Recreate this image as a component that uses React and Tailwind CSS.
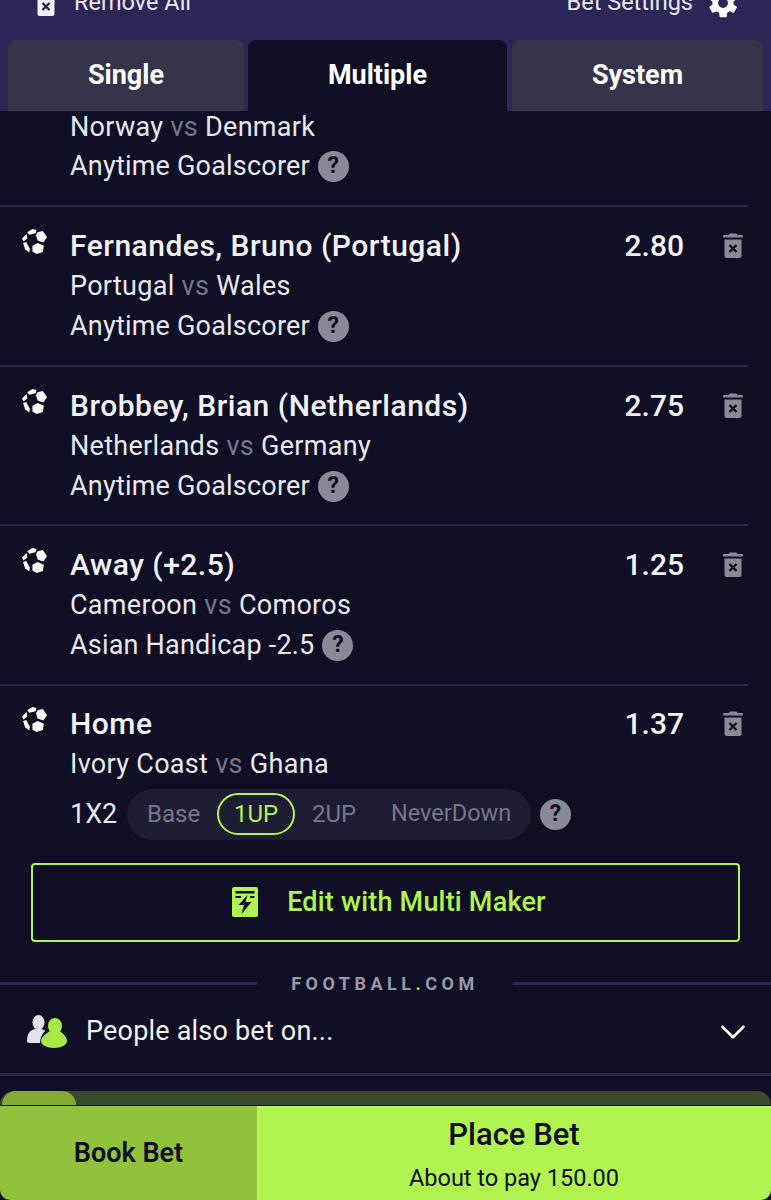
import React from "react";
import { ChevronDown } from "lucide-react";

const bets = [
  { title: "Fernandes, Bruno (Portugal)", odds: "2.80", home: "Portugal", away: "Wales", market: "Anytime Goalscorer" },
  { title: "Brobbey, Brian (Netherlands)", odds: "2.75", home: "Netherlands", away: "Germany", market: "Anytime Goalscorer" },
  { title: "Away (+2.5)", odds: "1.25", home: "Cameroon", away: "Comoros", market: "Asian Handicap -2.5" },
];

const BallIcon = () => (
  <svg width="25" height="25" viewBox="0 0 24 24" fill="#fff">
    <path d="M5 3 10 0 14 1 13 4 7 5.500Z" />
    <path d="M15 3 20 2 24 8 20.500 13 15 11 13.500 6Z" />
    <path d="M0 9 4.500 4.500 5 9 1.500 12Z" />
    <path d="M1 13.500 4 12.500 7.500 19 7 22.500 3 19.500Z" />
    <path d="M10 16 15 13.500 21 16 20 22 14 24 10 21.500Z" />
  </svg>
);

const TrashIcon = ({ color = "#8a8996", mark = "#0f0e24" }) => (
  <svg width="22" height="28" viewBox="0 0 22 28">
    <path d="M7.500 2.500h7l1 1.500H20a1 1 0 0 1 1 1v1.500H1V5a1 1 0 0 1 1-1h4.500z" fill={color} />
    <path d="M2.500 8.500h17V25a2 2 0 0 1-2 2h-13a2 2 0 0 1-2-2z" fill={color} />
    <path d="M7.500 14l7 7M14.500 14l-7 7" stroke={mark} strokeWidth="2.400" />
  </svg>
);

const HelpBadge = () => (
  <span className="flex h-[31px] w-[31px] items-center justify-center rounded-full bg-[#8a8996] text-[23px] font-bold text-[#0f0e24]">
    ?
  </span>
);

const GearIcon = () => (
  <svg width="34" height="34" viewBox="0 0 24 24" fill="#ffffff">
    <path d="M19.400 13c.1-.3.1-.7.1-1s0-.7-.1-1l2.100-1.600c.2-.2.2-.4.1-.6l-2-3.500c-.1-.2-.4-.3-.6-.2l-2.500 1c-.5-.4-1.100-.7-1.700-1l-.4-2.600c0-.3-.2-.5-.5-.5h-4c-.3 0-.5.2-.5.500l-.4 2.600c-.6.3-1.200.6-1.700 1l-2.500-1c-.2-.1-.5 0-.6.2l-2 3.500c-.1.2-.1.4.1.6L4.600 11c-.1.3-.1.700-.1 1s0 .7.1 1l-2.100 1.600c-.2.200-.2.400-.1.600l2 3.500c.1.200.4.300.6.200l2.500-1c.5.400 1.100.700 1.700 1l.4 2.600c0 .3.200.5.500.5h4c.3 0 .5-.2.5-.5l.4-2.600c.6-.3 1.200-.6 1.700-1l2.500 1c.2.100.5 0 .6-.2l2-3.500c.1-.2.100-.4-.1-.6zM12 15.500a3.500 3.500 0 1 1 0-7 3.500 3.500 0 0 1 0 7z" />
  </svg>
);

const BoltCard = () => (
  <svg width="26" height="30" viewBox="0 0 26 30">
    <rect width="26" height="30" rx="2" fill="#b2f44f" />
    <rect x="3.500" y="4" width="19" height="2.500" fill="#0f0e24" />
    <path d="M3.500 9H9v2H3.500zM18 9h4.500v2H18z" fill="#0f0e24" />
    <path d="M15.500 8 6.500 18h5.500L9.500 27l10-12h-6z" fill="#0f0e24" />
  </svg>
);

const PeopleIcon = () => (
  <svg width="40" height="33" viewBox="0 0 40 33">
    <ellipse cx="11.500" cy="7.500" rx="6" ry="7.500" fill="#e3e3e8" />
    <path d="M0 26c0-7 3-12 9-12h5c2 0 3 1 4 2-3 3-5 7-5 12H3c-2 0-3-1-3-2z" fill="#e3e3e8" />
    <ellipse cx="28" cy="11" rx="7" ry="8" fill="#a8ea45" />
    <path d="M23 16h10c4 3 7 7 7 10 0 4-6 7-13 7s-13-3-13-7c0-3 4-7 9-10z" fill="#a8ea45" />
  </svg>
);

const Tab = ({ label, active, className }) => (
  <div
    className={`flex h-[71px] items-center justify-center rounded-t-lg text-[27px] font-bold text-white ${
      active ? "bg-[#0f0e24]" : "bg-[#35344a]"
    } ${className}`}
  >
    {label}
  </div>
);

const Match = ({ home, away }) => (
  <p className="h-[40px] text-[27px] leading-[40px] tracking-[0.300px] text-[#e8e8ee]">
    {home} <span className="text-[#77768a]">vs</span> {away}
  </p>
);

const BetRow = ({ bet }) => (
  <div className="h-[159.500px] border-b-2 border-[#2a2850] pt-[19px]">
    <div className="flex">
      <div className="w-[70px] pl-[22px] pt-[3px]">
        <BallIcon />
      </div>
      <div className="flex-1">
        <div className="flex justify-between pr-[38px]">
          <p className="h-[40px] text-[30px] font-medium leading-[40px] tracking-[0.500px] text-[#f2f2f6]">{bet.title}</p>
          <p className="text-[30px] font-medium leading-[40px] text-[#f2f2f6]">{bet.odds}</p>
        </div>
        <Match home={bet.home} away={bet.away} />
        <div className="flex h-[41px] items-center gap-2 text-[27px] tracking-[0.200px] text-[#e8e8ee]">
          {bet.market}
          <HelpBadge />
        </div>
      </div>
      <div className="w-[26px] pt-[5px]">
        <TrashIcon />
      </div>
    </div>
  </div>
);

export default function App() {
  return (
    <div className="flex h-[1200px] flex-col overflow-hidden bg-[#0f0e24] font-['Roboto',sans-serif]">
      {/* Cabecalho */}
      <div className="h-[111px] shrink-0 overflow-hidden bg-[#2b2656]">
        <div className="-mt-[25px] flex h-[65px] items-center justify-between pb-[10px] pl-[35px] pr-[31px] text-[23.500px] text-[#e8e8ee]">
          <div className="flex items-center gap-[17px]">
            <TrashIcon color="#f2f2f6" mark="#2b2656" />
            <span>Remove All</span>
          </div>
          <div className="flex items-center gap-[13px]">
            <span>Bet Settings</span>
            <GearIcon />
          </div>
        </div>
        <div className="flex pl-[8px]">
          <Tab label="Single" className="w-[236px]" />
          <Tab label="Multiple" active className="ml-[4px] w-[259px]" />
          <Tab label="System" className="ml-[5px] w-[251px]" />
        </div>
      </div>

      {/* Lista de apostas */}
      <div className="min-h-0 flex-1 overflow-hidden">
        <div className="mr-[23px]">
          <div className="h-[96px] border-b-2 border-[#2a2850] pl-[70px]">
            <div className="-translate-y-[4px]">
              <Match home="Norway" away="Denmark" />
              <div className="flex h-[39px] items-center gap-2 text-[27px] tracking-[0.200px] text-[#e8e8ee]">
                Anytime Goalscorer
                <HelpBadge />
              </div>
            </div>
          </div>
          {bets.map((bet) => (
            <BetRow key={bet.title} bet={bet} />
          ))}

          <div className="pt-[18px]">
            <div className="flex">
              <div className="w-[70px] pl-[22px] pt-[3px]">
                <BallIcon />
              </div>
              <div className="flex-1">
                <div className="flex justify-between pr-[38px]">
                  <p className="text-[30px] font-medium leading-[40px] tracking-[0.500px] text-[#f2f2f6]">Home</p>
                  <p className="text-[30px] font-medium leading-[40px] text-[#f2f2f6]">1.37</p>
                </div>
                <Match home="Ivory Coast" away="Ghana" />
                <div className="mt-[5px] flex items-center text-[27px] text-[#e8e8ee]">
                  <span className="w-[57px]">1X2</span>
                  <div className="flex h-[51px] w-[404px] items-center rounded-full bg-[#1d1c32] pl-[20px] text-[24px] text-[#77768a]">
                    <span className="w-[70px]">Base</span>
                    <span className="flex h-[42px] w-[78px] items-center justify-center rounded-full border-2 border-[#b2f44f] text-[#b2f44f]">
                      1UP
                    </span>
                    <span className="w-[96px] pl-[17px]">2UP</span>
                    <span className="text-[23.500px]">NeverDown</span>
                  </div>
                  <span className="ml-[9px]">
                    <HelpBadge />
                  </span>
                </div>
              </div>
              <div className="w-[26px] pt-[5px]">
                <TrashIcon />
              </div>
            </div>
          </div>
        </div>

        <div className="mx-[31px] mt-[23px] flex h-[79px] w-[709px] items-center justify-center gap-[29px] rounded border-2 border-[#b2f44f] pl-[7px] text-[27px] font-medium tracking-[0.200px] text-[#b2f44f]">
          <BoltCard />
          Edit with Multi Maker
        </div>

        {/* Marca */}
        <div className="mt-[29px] flex items-center">
          <div className="h-[3px] w-[257px] bg-[#2a2850]" />
          <p className="flex-1 text-center text-[18px] font-bold leading-[26px] tracking-[4.500px] text-[#9a99a6]">
            FOOTBALL<span className="text-[#a8ea45]">.</span>COM
          </p>
          <div className="h-[3px] w-[258px] bg-[#2a2850]" />
        </div>

        <div className="-mt-[1px] flex h-[77px] items-center pb-[5px] pl-[27px] pr-[17px] text-[27px] tracking-[0.200px] text-[#f2f2f6]">
          <PeopleIcon />
          <span className="ml-[19px] flex-1">People also bet on...</span>
          <ChevronDown size={42} strokeWidth={1.500} color="#fff" />
        </div>
        <div className="h-[3px] bg-[#2a2850]" />
        <div className="mt-[15px] h-[14px] rounded-t-[14px] bg-[#3b4a2a] pl-[2px]">
          <div className="h-[14px] w-[74px] rounded-t-[18px] bg-[#84ab34]" />
        </div>
      </div>

      {/* Rodape */}
      <div className="flex h-[94px] shrink-0 text-[#0f0e24]">
        <div className="flex w-[257px] items-center justify-center rounded-bl-[10px] bg-[#90c23c] text-[27px] font-semibold">
          Book Bet
        </div>
        <div className="flex flex-1 flex-col items-center rounded-br-[10px] border-t border-[#c4f870] bg-[#b2f44f] pt-[7px]">
          <span className="text-[31px] font-medium leading-[42px]">Place Bet</span>
          <span className="mt-[4px] text-[23.500px] leading-[36px]">About to pay 150.00</span>
        </div>
      </div>
    </div>
  );
}
